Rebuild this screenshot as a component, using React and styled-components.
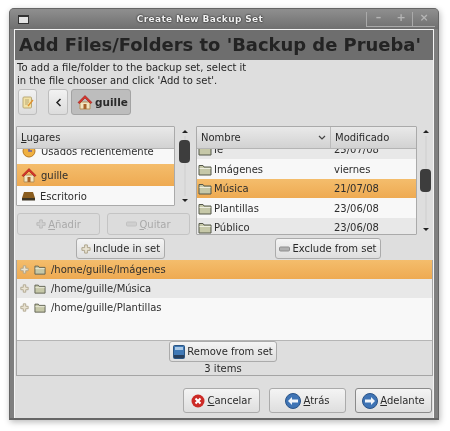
import React from 'react';
import styled, { createGlobalStyle } from 'styled-components';

const Global = createGlobalStyle`
  html, body { margin: 0; padding: 0; background: #fff; }
  body { width: 450px; height: 431px; overflow: hidden; font-family: "DejaVu Sans", sans-serif; }
`;
const Page = styled.div`
  width: 450px; height: 431px; box-sizing: border-box; padding: 8px 11px 11px 9px;
  filter: blur(0.45px);
`;
const Win = styled.div`
  width: 430px; height: 412px; box-sizing: border-box; display: flex; flex-direction: column;
  background: #7f7f7f; border-radius: 5px 5px 0 0; border: 1px solid #666; border-bottom-width: 2px;
  box-shadow: 1px 2px 6px rgba(0,0,0,.28);
`;
const TitleBar = styled.div`
  height: 20px; flex: none; display: flex; align-items: center; padding: 0 3px 0 8px;
  background: linear-gradient(#8f8f8f, #6f6f6f);
  border-radius: 4px 4px 0 0;
`;
const MenuBtn = styled.div`
  width: 9px; height: 6px; background: #e4e4e4; border: 1px solid #333; border-top-width: 2px;
`;
const Title = styled.div`
  flex: 1; text-align: center; color: #f2f2f2; font-size: 9px; font-weight: 700; letter-spacing: 0.35px;
  text-shadow: 0 0 1.5px #222, 0 0 1.5px #222; padding-left: 5px;
`;
const WinBtns = styled.div`
  display: flex; height: 14px; margin-bottom: 2px; align-self: flex-end;
  border-bottom: 1px solid #aaa; border-left: 1px solid #aaa;
`;
const WinBtn = styled.div`
  width: ${p => p.$w}px; text-align: center; font: 700 11px/12px "DejaVu Sans", sans-serif; color: #b5b5b5;
  border-right: ${p => p.$sep ? '1px solid #aaa' : 'none'};
`;
const Body = styled.div`
  flex: 1; margin: 0 4px 0 4px; background: #dedede; border: 1px solid #f4f4f4; border-bottom: none;
  display: flex; flex-direction: column; min-height: 0;
`;
const Banner = styled.div`
  height: 30px; flex: none; background: #6e6e6e; color: #232323; font-size: 17.95px; font-weight: 700;
  line-height: 30px; padding-left: 4px; white-space: nowrap; overflow: hidden;
`;
const Intro = styled.div`
  font-size: 10px; line-height: 13.3px; color: #262626; padding: 1px 0 0 2px; height: 28px; flex: none;
`;
const Toolbar = styled.div`
  display: flex; align-items: stretch; height: 26px; padding-left: 3px; flex: none;
`;
const ToolBtn = styled.div`
  width: ${p => p.$w}px; box-sizing: border-box; display: flex; align-items: center; justify-content: center; margin-right: ${p => p.$mr || 0}px;
  background: linear-gradient(#f2f2f2, #dcdcdc); border: 1px solid #bdbdbd; border-radius: 3px;
`;
const PathBtn = styled.div`
  display: flex; align-items: center; gap: 2px; width: 60px; box-sizing: border-box; padding-left: 5px; margin-left: 3px;
  background: #bdbdbd; border: 1px solid #a3a3a3; border-radius: 3px;
  font-size: 10.5px; font-weight: 700; color: #2a2a2a;
`;
const Panes = styled.div`
  display: grid; grid-template-columns: 175px 236px; column-gap: 5px; padding: 11px 0 0 1px; flex: none;
`;
const Pane = styled.div`
  display: flex; gap: ${p => p.$gap}px; height: ${p => p.$h}px;
`;
const Tree = styled.div`
  flex: 1; min-width: 0; display: flex; flex-direction: column; overflow: hidden; background: #f8f8f8;
  border: 1px solid #aaa; border-radius: 1px;
`;
const Head = styled.div`
  height: 21px; flex: none; display: flex; position: relative; z-index: 1;
  background: linear-gradient(#e9e9e9, #d2d2d2); border-bottom: 1px solid #b5b5b5;
  font-size: 10px; line-height: 20px; color: #2a2a2a;
`;
const HeadCell = styled.div`
  width: ${p => p.$w ? p.$w + 'px' : 'auto'}; flex: ${p => p.$w ? 'none' : 1}; padding-left: 4px; box-sizing: border-box;
  display: flex; align-items: center; justify-content: space-between; padding-right: 4px;
  border-right: ${p => p.$sep ? '1px solid #bbb' : 'none'};
`;
const Row = styled.div`
  height: ${p => p.$h}px; flex: none; display: flex; align-items: center; font-size: 10px; color: #2e2e2e;
  margin-top: ${p => p.$mt || 0}px; padding-left: ${p => p.$pl || 0}px; gap: ${p => p.$gap || 0}px;
  background: ${p => p.$sel ? 'linear-gradient(#f4bd6c, #eeaa52)' : p.$alt ? '#e8e8e8' : '#f8f8f8'};
`;
const NameCol = styled.div`
  width: 136px; flex: none; display: flex; align-items: center; gap: 2px;
`;
const Scroll = styled.div`
  width: ${p => p.$w}px; flex: none; display: flex; flex-direction: column; align-items: center; position: relative;
`;
const Arrow = styled.div`
  width: 0; height: 0; border-left: 3px solid transparent; border-right: 3px solid transparent;
  ${p => p.$up ? 'border-bottom: 3px solid #222;' : 'border-top: 3px solid #222;'}
  margin: ${p => p.$up ? '4px 0 0' : 'auto 0 4px'};
`;
const Thumb = styled.div`
  position: absolute; top: ${p => p.$top}px; left: 50%; margin-left: -5.5px; width: 11px; height: 23px;
  background: #3d3d3d; border-radius: 4px;
`;
const Track = styled.div`
  position: absolute; top: 10px; bottom: 10px; left: 50%; width: 2px; margin-left: -1px; background: #d6d6d6;
`;
const LeftCol = styled.div` display: flex; flex-direction: column; `;
const Pair = styled.div` display: flex; gap: 7px; padding: 7px 0 0 1px; `;
const Disabled = styled.div`
  width: 83px; height: 22px; box-sizing: border-box; display: flex; align-items: center; justify-content: center; gap: 2px;
  border: 1px solid #c4c4c4; border-radius: 3px; background: #dcdcdc; color: #a9a9a9; font-size: 10px;
`;
const Under = styled.span` text-decoration: underline; `;
const Actions = styled.div`
  display: grid; grid-template-columns: 1fr 1fr; height: 25px; flex: none; padding-top: 3px; box-sizing: border-box;
`;
const ActionCell = styled.div` display: flex; padding-left: ${p => p.$pl}px; `;
const Btn = styled.div`
  height: ${p => p.$h || 21}px; width: ${p => p.$w}px; box-sizing: border-box; display: flex; align-items: center; justify-content: center; gap: 2px;
  background: linear-gradient(#f4f4f4, #dedede); border: 1px solid ${p => p.$dark ? '#8a8a8a' : '#ababab'}; border-radius: 3px;
  font-size: 10px; color: #2a2a2a; white-space: nowrap;
`;
const SetBox = styled.div`
  margin: 0 0 0 1px; flex: none; height: 116px; box-sizing: border-box; display: flex; flex-direction: column;
  border: 1px solid #a5a5a5; border-top: none;
`;
const SetList = styled.div`
  height: 80px; flex: none; background: #f8f8f8; border-bottom: 1px solid #b5b5b5; display: flex; flex-direction: column;
`;
const Centered = styled.div` display: flex; justify-content: center; margin-right: 3px; `;
const Count = styled.div` text-align: center; font-size: 10px; color: #2a2a2a; line-height: 13px; margin-right: 3px; `;
const Footer = styled.div`
  flex: 1; display: flex; justify-content: flex-end; gap: 9px; padding: 12px 1px 0 0;
`;

const Plus = ({ c = '#a99f86', s = 10 }) => (
  <svg width={s} height={s} viewBox="0 0 11 11"><path d="M4 1h3v3h3v3H7v3H4V7H1V4h3z" fill={c === 'off' ? '#d0d0d0' : '#e9e3d2'} stroke={c === 'off' ? '#b9b9b9' : c} strokeWidth="1" /></svg>
);
const Minus = ({ off }) => (
  <svg width="11" height="6" viewBox="0 0 11 6"><rect x="0.5" y="1" width="10" height="4" rx="1" fill={off ? '#cfcfcf' : '#b0b0b0'} stroke={off ? '#c2c2c2' : '#8f8f8f'} /></svg>
);
const Folder = ({ s = 14 }) => (
  <svg width={s} height={s - 1} viewBox="0 0 14 13"><path d="M1 2.5h4l1 1.5h7v8H1z" fill="#c6c8a8" stroke="#55584a" strokeWidth="1" /><path d="M1.5 5.5h11" stroke="#ecedde" /></svg>
);
const Home = ({ s = 16 }) => (
  <svg width={s} height={s} viewBox="0 0 16 16"><path d="M3 8v7h10V8z" fill="#f1e6c4" stroke="#b5915a" /><rect x="6.5" y="10" width="3" height="5" fill="#a8622a" /><path d="M1 8.5L8 1.5l7 7-1.5 1L8 4 2.5 9.5z" fill="#d8322a" stroke="#9a1c18" strokeWidth=".6" /></svg>
);
const Desk = () => (
  <svg width="13" height="10" viewBox="0 0 13 10"><path d="M2 1h9l2 6H0z" fill="#8a5d1f" /><rect y="7" width="13" height="2.5" fill="#3d3524" /></svg>
);
const Recent = () => (
  <svg width="14" height="14" viewBox="0 0 14 14"><circle cx="7" cy="7" r="6" fill="#f0b040" stroke="#b87a20" /><path d="M7 3v4h3" fill="none" stroke="#6a5fa0" strokeWidth="1.6" /></svg>
);
const Note = () => (
  <svg width="12" height="13" viewBox="0 0 12 13"><rect x="1" y="1" width="8.5" height="11" rx="1" fill="#f2e2a6" stroke="#b9a877" /><path d="M3 4h4M3 6h4M3 8h3" stroke="#a99a6a" strokeWidth=".8" /><path d="M5.5 9.5L10.5 3.5l1 1-5 6z" fill="#e0902c" /></svg>
);
const Chevron = () => (
  <svg width="7" height="9" viewBox="0 0 7 9"><path d="M5.5 1L2 4.5 5.5 8" fill="none" stroke="#222" strokeWidth="1.5" /></svg>
);
const Caret = () => (
  <svg width="8" height="6" viewBox="0 0 8 6"><path d="M1 1l3 3 3-3" fill="none" stroke="#444" strokeWidth="1.2" /></svg>
);
const Drive = () => (
  <svg width="12" height="14" viewBox="0 0 12 14"><rect x=".5" y=".5" width="11" height="13" rx="1" fill="#3f78b5" stroke="#2a5583" /><rect x="2" y="2" width="8" height="3" fill="#a9c8e6" /><rect x="1" y="10" width="10" height="3" fill="#283f5c" /></svg>
);
const Cancel = () => (
  <svg width="14" height="14" viewBox="0 0 14 14"><circle cx="7" cy="7" r="6.5" fill="#cc2a26" /><path d="M4.5 4.5l5 5M9.5 4.5l-5 5" stroke="#fff" strokeWidth="2" /></svg>
);
const Nav = ({ back }) => (
  <svg width="16" height="16" viewBox="0 0 16 16"><circle cx="8" cy="8" r="7.5" fill="#3f74b5" stroke="#2b5488" /><path d={back ? 'M3 8l4-4v2.5h6v3H7V12z' : 'M13 8L9 4v2.5H3v3h6V12z'} fill="#f1f5fa" /></svg>
);

const ScrollBar = ({ w, top }) => (
  <Scroll $w={w}>
    <Track />
    <Arrow $up />
    <Thumb $top={top} />
    <Arrow />
  </Scroll>
);

const FileRow = ({ name, date, mt, h, sel, alt }) => (
  <Row $h={h} $mt={mt} $sel={sel} $alt={alt} $pl={1}>
    <NameCol><Folder />{name}</NameCol>
    <span>{date}</span>
  </Row>
);
const SetRow = ({ path, sel, alt }) => (
  <Row $h={19} $sel={sel} $alt={alt} $pl={3} $gap={5}><Plus s={9} /><Folder s={12} /><span>{path}</span></Row>
);

export default function App() {
  return (
    <Page>
      <Global />
      <Win>
        <TitleBar>
          <MenuBtn />
          <Title>Create New Backup Set</Title>
          <WinBtns>
            <WinBtn $w={23}>–</WinBtn>
            <WinBtn $w={22} $sep>+</WinBtn>
            <WinBtn $w={22}>×</WinBtn>
          </WinBtns>
        </TitleBar>
        <Body>
          <Banner>Add Files/Folders to 'Backup de Prueba'</Banner>
          <Intro>To add a file/folder to the backup set, select it<br />in the file chooser and click 'Add to set'.</Intro>
          <Toolbar>
            <ToolBtn $w={19} $mr={11}><Note /></ToolBtn>
            <ToolBtn $w={20}><Chevron /></ToolBtn>
            <PathBtn><Home />guille</PathBtn>
          </Toolbar>
          <Panes>
            <LeftCol>
              <Pane $h={80} $gap={3}>
                <Tree>
                  <Head><HeadCell><span><Under>L</Under>ugares</span></HeadCell></Head>
                  <Row $h={26} $mt={-11} $pl={5} $gap={5}><Recent />Usados recientemente</Row>
                  <Row $h={22} $sel $pl={4} $gap={4}><Home />guille</Row>
                  <Row $h={20} $pl={5} $gap={5}><Desk />Escritorio</Row>
                </Tree>
                <ScrollBar w={13} top={14} />
              </Pane>
              <Pair>
                <Disabled><Plus c="off" /><span><Under>A</Under>ñadir</span></Disabled>
                <Disabled><Minus off /><span><Under>Q</Under>uitar</span></Disabled>
              </Pair>
            </LeftCol>
            <Pane $h={109} $gap={2}>
              <Tree>
                <Head>
                  <HeadCell $w={134} $sep><span>Nombre</span><Caret /></HeadCell>
                  <HeadCell><span>Modificado</span></HeadCell>
                </Head>
                <FileRow name="Ie" date="25/07/08" h={19} mt={-9} alt />
                <FileRow name="Imágenes" date="viernes" h={20} />
                <FileRow name="Música" date="21/07/08" h={19} sel />
                <FileRow name="Plantillas" date="23/06/08" h={20} />
                <FileRow name="Público" date="23/06/08" h={19} alt />
              </Tree>
              <ScrollBar w={13} top={43} />
            </Pane>
          </Panes>
          <Actions>
            <ActionCell $pl={61}><Btn $w={89}><Plus />Include in set</Btn></ActionCell>
            <ActionCell $pl={51}><Btn $w={106}><Minus />Exclude from set</Btn></ActionCell>
          </Actions>
          <SetBox>
            <SetList>
              <SetRow path="/home/guille/Imágenes" sel />
              <SetRow path="/home/guille/Música" alt />
              <SetRow path="/home/guille/Plantillas" />
            </SetList>
            <Centered><Btn $w={108}><Drive />Remove from set</Btn></Centered>
            <Count>3 items</Count>
          </SetBox>
          <Footer>
            <Btn $w={77} $h={25}><Cancel /><span><Under>C</Under>ancelar</span></Btn>
            <Btn $w={77} $h={25}><Nav back /><span><Under>A</Under>trás</span></Btn>
            <Btn $w={77} $h={25} $dark><Nav /><span><Under>A</Under>delante</span></Btn>
          </Footer>
        </Body>
      </Win>
    </Page>
  );
}
